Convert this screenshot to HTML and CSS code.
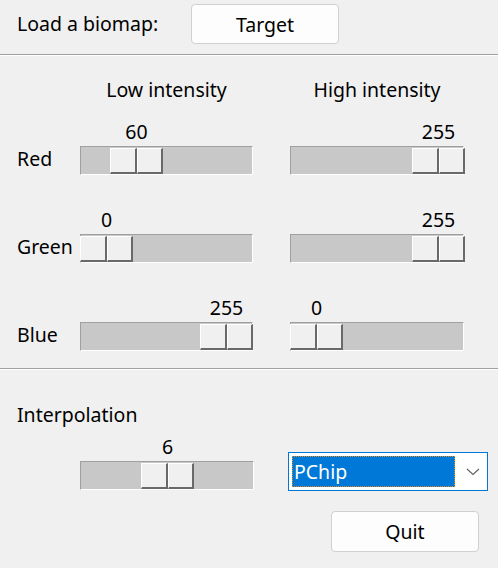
FILE: index.html
```html
<!DOCTYPE html>
<html>
<head>
<meta charset="utf-8">
<link rel="stylesheet" href="styles.css">
</head>
<body>
<div class="window">
  <div class="header">
    <span class="hlabel">Load a biomap:</span>
    <button class="btn btn-target">Target</button>
  </div>
  <div class="sep"></div>
  <div class="colors">
    <div class="corner"></div>
    <div class="heading">Low intensity</div>
    <div class="heading high">High intensity</div>

    <div class="rlabel">Red</div>
    <div class="slider" style="--x:30px"><div class="val">60</div><div class="trough"><div class="thumb"><span></span><span></span></div></div></div>
    <div class="slider high" style="--x:122px"><div class="val">255</div><div class="trough"><div class="thumb"><span></span><span></span></div></div></div>

    <div class="rlabel">Green</div>
    <div class="slider" style="--x:0px"><div class="val">0</div><div class="trough"><div class="thumb"><span></span><span></span></div></div></div>
    <div class="slider high" style="--x:122px"><div class="val">255</div><div class="trough"><div class="thumb"><span></span><span></span></div></div></div>

    <div class="rlabel">Blue</div>
    <div class="slider" style="--x:120px"><div class="val">255</div><div class="trough"><div class="thumb"><span></span><span></span></div></div></div>
    <div class="slider high" style="--x:0px"><div class="val">0</div><div class="trough"><div class="thumb"><span></span><span></span></div></div></div>
  </div>
  <div class="sep"></div>
  <div class="interp">
    <div class="ilabel">Interpolation</div>
    <div class="irow">
      <div class="slider islider" style="--x:61px"><div class="val">6</div><div class="trough"><div class="thumb"><span></span><span></span></div></div></div>
      <div class="select">
        <div class="sel-value"><span>PChip</span></div>
        <div class="chev"><svg width="14" height="8" viewBox="0 0 14 8"><path d="M1 1 L7 6.5 L13 1" fill="none" stroke="#606060" stroke-width="1.1"/></svg></div>
      </div>
    </div>
    <div class="qrow"><button class="btn btn-quit">Quit</button></div>
  </div>
</div>
</body>
</html>
```
FILE: styles.css
```css
html, body {
  margin: 0;
  padding: 0;
  background: #f0f0f0;
}
body {
  font-family: "Noto Sans", "Open Sans", sans-serif;
  font-size: 19.5px;
  color: #000;
  width: 498px;
  height: 568px;
  overflow: hidden;
}
.header {
  height: 54px;
  box-sizing: border-box;
  padding: 4px 0 0 17px;
  display: flex;
  align-items: flex-start;
}
.hlabel {
  width: 174px;
  line-height: 40px;
  height: 40px;
  white-space: nowrap;
}
.btn {
  font-family: inherit;
  font-size: 19.5px;
  color: #000;
  background: #fdfdfd;
  border: 1px solid #d0d0d0;
  border-radius: 4px;
  padding: 0;
  box-sizing: border-box;
}
.btn-target {
  width: 148px;
  height: 40px;
}
.sep {
  height: 1px;
  background: #a0a0a0;
  border-bottom: 1px solid #fff;
}
.colors {
  display: grid;
  grid-template-columns: 63px 173px 211px;
  column-gap: 0;
  row-gap: 33px;
  padding: 21px 0 17px 17px;
  align-items: end;
}
.high {
  margin-left: 37px;
}
.corner {
  margin-bottom: -12px;
}
.heading {
  margin-bottom: -14px;
  padding-top: 2px;
  text-align: center;
  line-height: 22px;
  white-space: nowrap;
}
.rlabel {
  line-height: 26px;
  height: 29px;
}
.slider {
  display: flex;
  flex-direction: column;
}
.val {
  width: 53px;
  margin-left: var(--x);
  text-align: center;
  line-height: 22px;
  height: 22px;
  padding-top: 1px;
  margin-bottom: 3px;
}
.trough {
  position: relative;
  height: 29px;
  box-sizing: border-box;
  background: #c8c8c8;
  border-top: 1px solid #a0a0a0;
  border-left: 1px solid #a0a0a0;
  border-bottom: 1px solid #fff;
  border-right: 1px solid #fff;
}
.thumb {
  position: absolute;
  top: 1px;
  bottom: 0;
  left: calc(var(--x) - 1px);
  width: 53px;
  display: flex;
}
.thumb span {
  flex: 1;
  background: #f0f0f0;
  border-top: 1px solid #fff;
  border-left: 1px solid #fff;
  border-right: 2px solid #696969;
  border-bottom: 2px solid #696969;
}
.interp {
  padding: 33px 0 0 17px;
}
.ilabel {
  line-height: 24px;
}
.irow {
  display: flex;
  align-items: flex-start;
  margin-top: 8px;
  padding-left: 63px;
}
.islider {
  width: 174px;
}
.select {
  margin-left: 34px;
  margin-top: 17px;
  width: 200px;
  height: 39px;
  box-sizing: border-box;
  border: 1px solid #0078d7;
  background: #fff;
  display: flex;
  align-items: stretch;
  padding: 3px;
}
.sel-value {
  flex: 1;
  background: #0078d7;
  color: #fff;
  outline: 1px dotted #e08a1e;
  outline-offset: -1px;
  display: flex;
  align-items: center;
  padding-left: 2px;
}
.chev {
  width: 29px;
  box-sizing: border-box;
  padding-right: 4px;
  display: flex;
  align-items: center;
  justify-content: flex-end;
}
.qrow {
  display: flex;
  justify-content: flex-end;
  padding-right: 19px;
  margin-top: 20px;
}
.btn-quit {
  width: 148px;
  height: 41px;
}
```
